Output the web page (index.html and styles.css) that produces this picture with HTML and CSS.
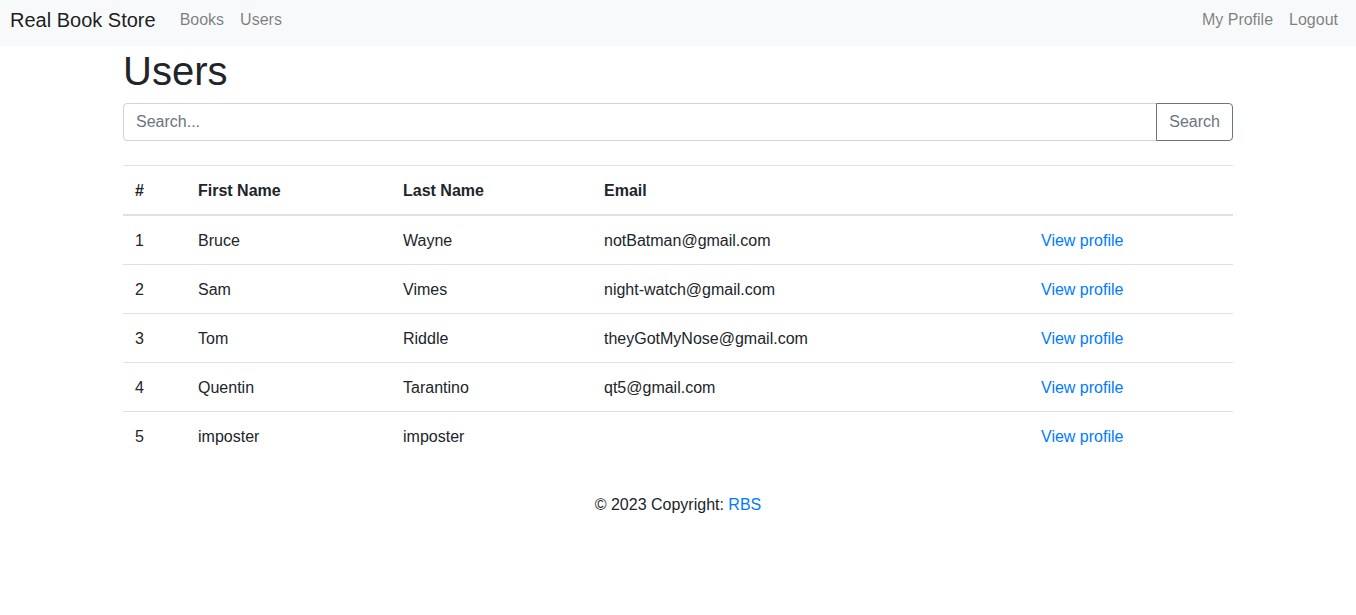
FILE: index.html
```html
<!DOCTYPE html>
<html lang="en">
<head>
<meta charset="utf-8">
<title>Users - Real Book Store</title>
<link rel="stylesheet" href="styles.css">
</head>
<body>
<nav class="navbar">
  <div class="nav-left">
    <a class="brand" href="#">Real Book Store</a>
    <a class="nav-link" href="#">Books</a>
    <a class="nav-link" href="#">Users</a>
  </div>
  <div class="nav-right">
    <a class="nav-link" href="#">My Profile</a>
    <a class="nav-link" href="#">Logout</a>
  </div>
</nav>
<main class="container">
  <h1 class="title">Users</h1>
  <form class="input-group">
    <input class="form-control" type="text" placeholder="Search...">
    <button class="btn-outline" type="button">Search</button>
  </form>
  <table class="table">
    <thead>
      <tr>
        <th class="c1">#</th>
        <th class="c2">First Name</th>
        <th class="c3">Last Name</th>
        <th class="c4">Email</th>
        <th class="c5"></th>
      </tr>
    </thead>
    <tbody>
      <tr><td>1</td><td>Bruce</td><td>Wayne</td><td>notBatman@gmail.com</td><td><a href="#">View profile</a></td></tr>
      <tr><td>2</td><td>Sam</td><td>Vimes</td><td>night-watch@gmail.com</td><td><a href="#">View profile</a></td></tr>
      <tr><td>3</td><td>Tom</td><td>Riddle</td><td>theyGotMyNose@gmail.com</td><td><a href="#">View profile</a></td></tr>
      <tr><td>4</td><td>Quentin</td><td>Tarantino</td><td>qt5@gmail.com</td><td><a href="#">View profile</a></td></tr>
      <tr><td>5</td><td>imposter</td><td>imposter</td><td></td><td><a href="#">View profile</a></td></tr>
    </tbody>
  </table>
</main>
<footer class="footer">© 2023 Copyright: <a href="#">RBS</a></footer>
</body>
</html>
```

FILE: styles.css
```css
* { box-sizing: border-box; }
body {
  margin: 0;
  font-family: "Liberation Sans", Arial, sans-serif;
  font-size: 16px;
  line-height: 1.5;
  color: #212529;
  background: #fff;
}
a { color: #007bff; text-decoration: none; }

.navbar {
  display: flex;
  justify-content: space-between;
  align-items: flex-start;
  height: 46px;
  padding: 5px 10px 0;
  background: #f8f9fa;
}
.nav-left, .nav-right { display: flex; align-items: center; }
.brand {
  font-size: 20px;
  line-height: 30px;
  color: rgba(0,0,0,.9);
  margin-right: 16px;
}
.nav-link {
  color: rgba(0,0,0,.5);
  padding: 0 8px;
  line-height: 30px;
}

.container {
  width: 1140px;
  margin: 0 auto;
  padding: 0 15px;
}
.title {
  margin: 1px 0 8px;
  font-size: 40px;
  font-weight: 500;
  line-height: 1.2;
}
.input-group {
  display: flex;
  margin: 0 0 24px;
  height: 38px;
}
.form-control {
  flex: 1;
  min-width: 0;
  height: 38px;
  padding: 6px 12px;
  font: inherit;
  color: #495057;
  border: 1px solid #ced4da;
  border-radius: 4px 0 0 4px;
  outline: none;
}
.form-control::placeholder { color: #6c757d; opacity: 1; }
.btn-outline {
  height: 38px;
  padding: 6px 12px;
  font: inherit;
  color: #6c757d;
  background: transparent;
  border: 1px solid #6c757d;
  border-radius: 0 4px 4px 0;
  margin-left: -1px;
}

.table {
  width: 100%;
  border-collapse: collapse;
  margin-bottom: 16px;
  table-layout: fixed;
}
.table th, .table td {
  padding: 13px 12px 11px;
  text-align: left;
  vertical-align: top;
  border-top: 1px solid #dee2e6;
}
.table thead th {
  font-weight: bold;
  border-bottom: 2px solid #dee2e6;
}
.c1 { width: 63px; }
.c2 { width: 205px; }
.c3 { width: 201px; }
.c4 { width: 437px; }
.c5 { width: 204px; }

.footer {
  text-align: center;
  padding: 17px 16px 16px;
}
```
